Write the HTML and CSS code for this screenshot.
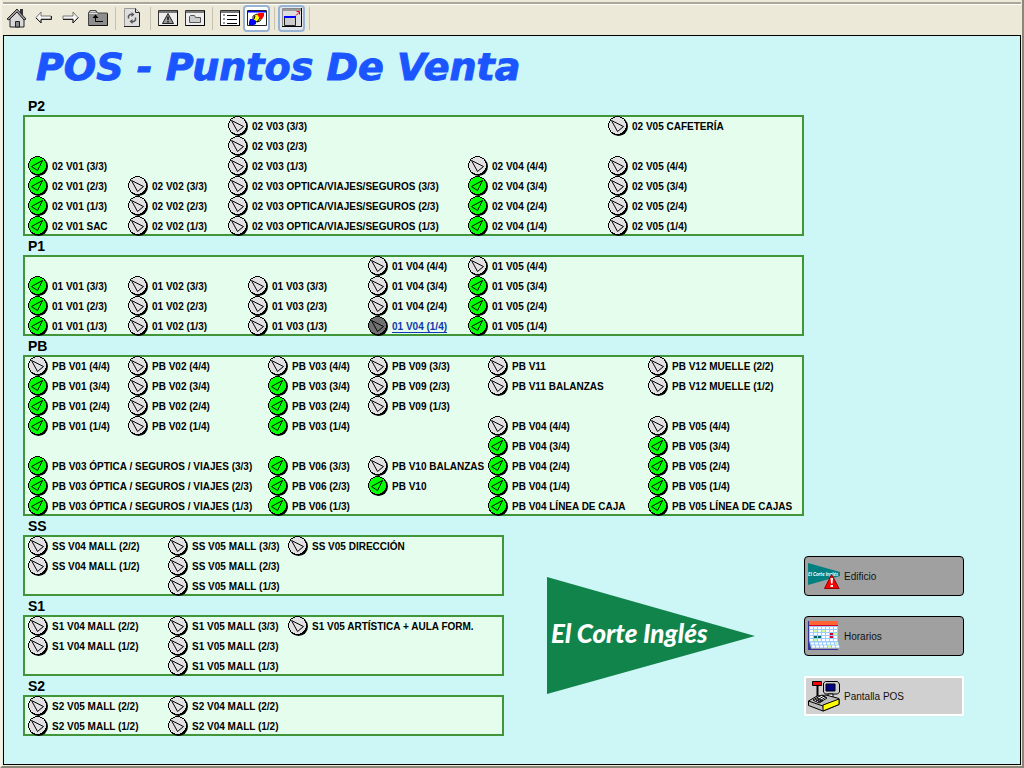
FILE: index.html
```
<!DOCTYPE html>
<html lang="es">
<head>
<meta charset="utf-8">
<title>POS - Puntos De Venta</title>
<link rel="stylesheet" href="styles.css">
</head>
<body>
<div class="window">
<nav class="toolbar" aria-label="Herramientas">
  <button class="tool" aria-label="Inicio"><svg width="20" height="20" viewBox="0 0 20 20"><path d="M13 1h3v6h-3z" fill="#333"/><path d="M3 10L10 4l7 6v9H3z" fill="#d8d8d8" stroke="#222"/><path d="M0 11L10 1l9 10-2 1-7-8-8 8z" fill="#999" stroke="#222"/><path d="M8.500 13.500h4V19h-4z" fill="#888" stroke="#222"/></svg></button>
  <button class="tool" aria-label="Atrás"><svg width="20" height="20" viewBox="0 0 20 20"><path d="M2 9.500L7 4v4h10v3H7v4z" fill="#f4f4f4" stroke="#777"/><path d="M7 11.500h10.500V8M2 10l5 5v-3" fill="none" stroke="#222"/></svg></button>
  <button class="tool" aria-label="Adelante"><svg width="20" height="20" viewBox="0 0 20 20"><path d="M17 9.500L12 4v4H2v3h10v4z" fill="#f4f4f4" stroke="#777"/><path d="M2 11.500h10V15l5.500-5.500" fill="none" stroke="#222"/></svg></button>
  <button class="tool" aria-label="Subir"><svg width="20" height="20" viewBox="0 0 20 20"><path d="M.5 17.500V5L2 2.500h6L9.500 5h10v12.500z" fill="#8d8d8d" stroke="#444"/><path d="M1 5.500h8.500M2.500 3.500h5" stroke="#ddd"/><path d="M1 17.500h18.500V6" fill="none" stroke="#111"/><path d="M7.500 8v5.500H15" fill="none" stroke="#000"/><path d="M4.500 10l3-3.500 3 3.500z"/></svg></button>
  <span class="sep"></span>
  <button class="tool" aria-label="Actualizar"><svg width="20" height="20" viewBox="0 0 20 20"><path d="M1.500.5h11l4 4v14h-15z" fill="#dedede" stroke="#999"/><path d="M1 18.500h15.500V4.500h-4V.5" fill="none" stroke="#222"/><path d="M5.500 10.500V8l1.500-1.500h2M12.500 9.500V12L11 13.500H9" fill="none" stroke="#555" stroke-width="1.500"/><path d="M8.500 4l3 2.500-3 2.500zM9.500 11l-3 2.500 3 2.500z" fill="#555"/></svg></button>
  <span class="sep"></span>
  <button class="tool" aria-label="Alarmas"><svg width="20" height="20" viewBox="0 0 20 20"><path d="M.5 2.500h19v15H.5z" fill="#eee" stroke="#333"/><path d="M1 3h18v2H1z" fill="#777"/><path d="M.5 17.500h19v-15" fill="none" stroke="#000"/><path d="M10 5.500L15.500 15.500h-11z" fill="#999" stroke="#222"/><path d="M10 8.500v3.500M10 13v1.500" stroke="#111" stroke-width="1.500"/></svg></button>
  <button class="tool" aria-label="Carpetas"><svg width="20" height="20" viewBox="0 0 20 20"><path d="M.5 2.500h19v15H.5z" fill="#eee" stroke="#333"/><path d="M1 3h18v2H1z" fill="#777"/><path d="M.5 17.500h19v-15" fill="none" stroke="#000"/><path d="M4.500 14.500v-6l1-1h4l1 2h5v5z" fill="#ccc" stroke="#555"/></svg></button>
  <span class="sep"></span>
  <button class="tool" aria-label="Lista"><svg width="20" height="20" viewBox="0 0 20 20"><path d="M.5 2.500h19v15H.5z" fill="#fff" stroke="#333"/><path d="M1 3h18v2H1z" fill="#777"/><path d="M.5 17.500h19v-15" fill="none" stroke="#000"/><path d="M7 7.500h10M7 11.500h10M7 15.500h10" stroke="#000"/><path d="M3.500 6.500h1v1h-1zM3.500 10.500h1v1h-1zM3.500 14.500h1v1h-1z" fill="none" stroke="#777"/></svg></button>
  <button class="tool active" aria-label="Gráfico"><svg width="20" height="20" viewBox="0 0 20 20"><path d="M.5 2.500h19v15H.5z" fill="#fff" stroke="#222"/><path d="M1 3h18v1.500H1z" fill="#00f"/><path d="M6 8l4-2 5 4-2 3-3 1-4-2z" fill="#ff0" stroke="#222"/><path d="M10 6l2-1h5v3l-2 3h-2z" fill="#f00"/><path d="M3 11h3l3 2v3l-2 1H2v-3z" fill="#00f"/><path d="M8 8l-1 3M13 10l-3 4" stroke="#000"/></svg></button>
  <span class="sep"></span>
  <button class="tool active pressed" aria-label="Ventana"><svg width="20" height="20" viewBox="0 0 20 20"><path d="M.5.5h19v18H.5z" fill="#ddd" stroke="#888"/><path d="M1 1h18v2H1z" fill="#999"/><path d="M19.500 0v18.500H0" fill="none" stroke="#000"/><path d="M2.500 8.500h11v9h-11z" fill="#ccc" stroke="#222"/><path d="M2 8h12v2H2z" fill="#00f"/><path d="M14 7.500l3.500-3.500M14.500 3.500h3v3" fill="none" stroke="#d02"/></svg></button>
  <span class="sep"></span>
</nav>
<main class="board">
  <h1>POS - Puntos De Venta</h1>
  <h2>P2</h2>
  <section class="panel p2 bottom">
    <ul><li><a class="on" href="#">02 V01 (3/3)</a></li><li><a class="on" href="#">02 V01 (2/3)</a></li><li><a class="on" href="#">02 V01 (1/3)</a></li><li><a class="on" href="#">02 V01 SAC</a></li></ul>
    <ul><li><a href="#">02 V02 (3/3)</a></li><li><a href="#">02 V02 (2/3)</a></li><li><a href="#">02 V02 (1/3)</a></li></ul>
    <ul><li><a href="#">02 V03 (3/3)</a></li><li><a href="#">02 V03 (2/3)</a></li><li><a href="#">02 V03 (1/3)</a></li><li><a href="#">02 V03 OPTICA/VIAJES/SEGUROS (3/3)</a></li><li><a href="#">02 V03 OPTICA/VIAJES/SEGUROS (2/3)</a></li><li><a href="#">02 V03 OPTICA/VIAJES/SEGUROS (1/3)</a></li></ul>
    <ul><li><a href="#">02 V04 (4/4)</a></li><li><a class="on" href="#">02 V04 (3/4)</a></li><li><a class="on" href="#">02 V04 (2/4)</a></li><li><a class="on" href="#">02 V04 (1/4)</a></li></ul>
    <ul><li><a href="#">02 V05 CAFETERÍA</a></li><li class="skip"><a href="#">02 V05 (4/4)</a></li><li><a href="#">02 V05 (3/4)</a></li><li><a href="#">02 V05 (2/4)</a></li><li><a href="#">02 V05 (1/4)</a></li></ul>
  </section>
  <h2>P1</h2>
  <section class="panel p1 bottom">
    <ul><li><a class="on" href="#">01 V01 (3/3)</a></li><li><a class="on" href="#">01 V01 (2/3)</a></li><li><a class="on" href="#">01 V01 (1/3)</a></li></ul>
    <ul><li><a href="#">01 V02 (3/3)</a></li><li><a href="#">01 V02 (2/3)</a></li><li><a href="#">01 V02 (1/3)</a></li></ul>
    <ul><li><a href="#">01 V03 (3/3)</a></li><li><a href="#">01 V03 (2/3)</a></li><li><a href="#">01 V03 (1/3)</a></li></ul>
    <ul><li><a href="#">01 V04 (4/4)</a></li><li><a href="#">01 V04 (3/4)</a></li><li><a href="#">01 V04 (2/4)</a></li><li><a class="selected" href="#">01 V04 (1/4)</a></li></ul>
    <ul><li><a href="#">01 V05 (4/4)</a></li><li><a class="on" href="#">01 V05 (3/4)</a></li><li><a class="on" href="#">01 V05 (2/4)</a></li><li><a class="on" href="#">01 V05 (1/4)</a></li></ul>
  </section>
  <h2>PB</h2>
  <section class="panel pb">
    <ul><li><a href="#">PB V01 (4/4)</a></li><li><a class="on" href="#">PB V01 (3/4)</a></li><li><a class="on" href="#">PB V01 (2/4)</a></li><li><a class="on" href="#">PB V01 (1/4)</a></li><li class="skip"><a class="on" href="#">PB V03 ÓPTICA / SEGUROS / VIAJES (3/3)</a></li><li><a class="on" href="#">PB V03 ÓPTICA / SEGUROS / VIAJES (2/3)</a></li><li><a class="on" href="#">PB V03 ÓPTICA / SEGUROS / VIAJES (1/3)</a></li></ul>
    <ul><li><a href="#">PB V02 (4/4)</a></li><li><a href="#">PB V02 (3/4)</a></li><li><a href="#">PB V02 (2/4)</a></li><li><a href="#">PB V02 (1/4)</a></li></ul>
    <ul><li><a href="#">PB V03 (4/4)</a></li><li><a class="on" href="#">PB V03 (3/4)</a></li><li><a class="on" href="#">PB V03 (2/4)</a></li><li><a class="on" href="#">PB V03 (1/4)</a></li><li class="skip"><a class="on" href="#">PB V06 (3/3)</a></li><li><a class="on" href="#">PB V06 (2/3)</a></li><li><a class="on" href="#">PB V06 (1/3)</a></li></ul>
    <ul><li><a href="#">PB V09 (3/3)</a></li><li><a href="#">PB V09 (2/3)</a></li><li><a href="#">PB V09 (1/3)</a></li><li class="skip-two"><a href="#">PB V10 BALANZAS</a></li><li><a class="on" href="#">PB V10</a></li></ul>
    <ul><li><a href="#">PB V11</a></li><li><a href="#">PB V11 BALANZAS</a></li><li class="skip"><a href="#">PB V04 (4/4)</a></li><li><a class="on" href="#">PB V04 (3/4)</a></li><li><a class="on" href="#">PB V04 (2/4)</a></li><li><a class="on" href="#">PB V04 (1/4)</a></li><li><a class="on" href="#">PB V04 LÍNEA DE CAJA</a></li></ul>
    <ul><li><a href="#">PB V12 MUELLE (2/2)</a></li><li><a href="#">PB V12 MUELLE (1/2)</a></li><li class="skip"><a href="#">PB V05 (4/4)</a></li><li><a class="on" href="#">PB V05 (3/4)</a></li><li><a class="on" href="#">PB V05 (2/4)</a></li><li><a class="on" href="#">PB V05 (1/4)</a></li><li><a class="on" href="#">PB V05 LÍNEA DE CAJAS</a></li></ul>
  </section>
  <div class="lower">
    <div class="basement">
      <h2>SS</h2>
      <section class="panel mall">
        <ul><li><a href="#">SS V04 MALL (2/2)</a></li><li><a href="#">SS V04 MALL (1/2)</a></li></ul>
        <ul><li><a href="#">SS V05 MALL (3/3)</a></li><li><a href="#">SS V05 MALL (2/3)</a></li><li><a href="#">SS V05 MALL (1/3)</a></li></ul>
        <ul><li><a href="#">SS V05 DIRECCIÓN</a></li></ul>
      </section>
      <h2>S1</h2>
      <section class="panel mall">
        <ul><li><a href="#">S1 V04 MALL (2/2)</a></li><li><a href="#">S1 V04 MALL (1/2)</a></li></ul>
        <ul><li><a href="#">S1 V05 MALL (3/3)</a></li><li><a href="#">S1 V05 MALL (2/3)</a></li><li><a href="#">S1 V05 MALL (1/3)</a></li></ul>
        <ul><li><a href="#">S1 V05 ARTÍSTICA + AULA FORM.</a></li></ul>
      </section>
      <h2>S2</h2>
      <section class="panel mall">
        <ul><li><a href="#">S2 V05 MALL (2/2)</a></li><li><a href="#">S2 V05 MALL (1/2)</a></li></ul>
        <ul><li><a href="#">S2 V04 MALL (2/2)</a></li><li><a href="#">S2 V04 MALL (1/2)</a></li></ul>
      </section>
    </div>
    <svg class="logo" width="208" height="118" viewBox="0 0 208 118" role="img" aria-label="El Corte Inglés">
      <path d="M0 0L208 59 0 117z" fill="#11844b"/>
      <text class="logo-text" x="4" y="66">El Corte Inglés</text>
    </svg>
    <div class="actions">
      <button class="action">
        <svg width="32" height="32" viewBox="0 0 32 32"><path d="M0 3L32 12v4L0 25z" fill="#008080"/><text class="logo-mini" x="0" y="16">El Corte Inglés</text><path d="M25 16l7 13H18z" fill="#777"/><path d="M23.500 14.500L31 28.500H16.500z" fill="#f00" stroke="#900"/><path d="M22.500 18h2.500l-.5 5.500H23zM22.500 25H25v2h-2.500z" fill="#fff"/></svg>
        Edificio</button>
      <button class="action">
        <svg width="32" height="32" viewBox="0 0 32 32"><path d="M0 1h1l2 28h27v1H0z" fill="#339"/><path d="M1 1h29v4H1z" fill="#f63"/><path d="M1 5h29v1H1z" fill="#c03"/><path d="M1 6h29v15l2 7H3L1 21z" fill="#9cf"/><path d="M2 8h27M2 11h27M2 14h27M2 17h27M2 20h27M3 23.500h27M4 26.500h27" stroke="#fff" stroke-width="2" stroke-dasharray="3 1"/><path d="M6 11h3M14 11h3M26 14h3M6 20h3M27 23.500h3M20 26.500h3" stroke="#cf9" stroke-width="2"/><path d="M6 17h3M10 17h3" stroke="#066" stroke-width="2"/><path d="M22 14h3M22 17h3" stroke="#c03" stroke-width="2"/></svg>
        Horarios</button>
      <button class="action current">
        <svg width="32" height="32" viewBox="0 0 32 32"><path d="M9.500 5v13" stroke="#000" stroke-width="2"/><path d="M4.500 1.500h9v4h-9z" fill="#f00" stroke="#000"/><path d="M15.500 3l2-1.500h12L31.500 4v8l-2 2h-12l-2-2z" fill="#ccc" stroke="#000"/><path d="M18 4h9v7h-9z" fill="#008" stroke="#000"/><path d="M20 14h5v5h-5z" fill="#fff" stroke="#000"/><path d="M.5 21L9 16l9-1 13 3.500v6L15 31 .5 25.500z" fill="#bbb" stroke="#000"/><path d="M15 25l16-6v5.500L15 31z" fill="#ff0" stroke="#000"/><path d="M.5 21L15 26" stroke="#000"/><path d="M5 20l9-5 5 3-8 5z" fill="#fff" stroke="#000"/><path d="M7 19l6 3M9 18l6 3M8 21l8-5M10 22l8-5" stroke="#000"/></svg>
        Pantalla POS</button>
    </div>
  </div>
</main>
</div>
</body>
</html>
```
FILE: styles.css
```
* { box-sizing: border-box; }

body {
  margin: 0;
  font-family: "Liberation Sans", Arial, sans-serif;
  color: #000;
}

.window {
  min-height: 100vh;
  display: flex;
  flex-direction: column;
  padding: 2px 1px 1px 1px;
  background: #ece9d8;
  border: solid;
  border-width: 0 2px 2px 2px;
  border-color: #ece9d8 #8a8778 #8a8778 #f4f2e8;
}

.toolbar {
  display: flex;
  align-items: center;
  height: 33px;
  padding-bottom: 3px;
  border-top: 2px solid #aca899;
  box-shadow: inset 0 1px #fff;
}

.tool {
  display: flex;
  align-items: center;
  justify-content: center;
  width: 27px;
  height: 27px;
  padding: 0;
  border: 2px solid transparent;
  border-radius: 4px;
  background: none;
}

.tool svg { flex: none; }

.tool.active {
  background: #fff;
  border-color: #98b4d4;
}

.tool.pressed { background: #e4e8ee; }

.sep {
  width: 8px;
  height: 23px;
  background: linear-gradient(#c5c2b2, #c5c2b2) center / 1px 100% no-repeat;
}

.board {
  flex: 1;
  padding: 0 19px 28px;
  border: 1px solid #000;
  background: #cdf6f6;
}

h1 {
  margin: 0;
  padding: 2px 0 0 13px;
  font: italic 900 38px/58px "Arial Black", "DejaVu Sans", sans-serif;
  color: #1b55ff;
  -webkit-text-stroke: 1px #1b55ff;
  white-space: nowrap;
}

h2 {
  margin: 0;
  padding: 1px 0 0 5px;
  font: bold 14px/18px "Liberation Sans", Arial, sans-serif;
}

.panel {
  display: grid;
  max-width: 781px;
  padding: 1px 0 0 5px;
  background: #e5fdec;
  box-shadow: inset 0 0 0 2px #42963a;
}

.panel.bottom { align-items: end; }
.p2 { grid-template-columns: 100px 100px 240px 140px 1fr; }
.p1 { grid-template-columns: 100px 120px 120px 100px 1fr; }
.pb { grid-template-columns: 100px 140px 100px 120px 160px 1fr; }
.mall { grid-template-columns: 140px 120px 1fr; }

ul {
  min-width: 0;
  margin: 0;
  padding: 0;
  list-style: none;
}

li { height: 20px; }
.skip { margin-top: 20px; }
.skip-two { margin-top: 40px; }

.panel a {
  display: flex;
  gap: 4px;
  height: 20px;
  font-size: 10px;
  font-weight: bold;
  line-height: 22px;
  color: #000;
  text-decoration: none;
  white-space: nowrap;
}

.panel a::before {
  content: "";
  flex: none;
  width: 20px;
  height: 20px;
  background: url("data:image/svg+xml,%3Csvg xmlns='http://www.w3.org/2000/svg' viewBox='0 0 20 20'%3E%3Ccircle cx='10.500' cy='10.500' r='9.500'/%3E%3Ccircle cx='9.500' cy='9.500' r='9' fill='%23e2e0e2' stroke='%23000' shape-rendering='crispEdges'/%3E%3Cpath d='M3.500 4.500L15.500 10.500 9.500 15.500z' fill='none' stroke='%23000'/%3E%3C/svg%3E");
}

.panel a.on::before {
  background-image: url("data:image/svg+xml,%3Csvg xmlns='http://www.w3.org/2000/svg' viewBox='0 0 20 20'%3E%3Ccircle cx='10.500' cy='10.500' r='9.500'/%3E%3Ccircle cx='9.500' cy='9.500' r='9' fill='%2300ff00' stroke='%23000' shape-rendering='crispEdges'/%3E%3Cpath d='M14.500 4.500L3.500 10.500 9.500 14.500z' fill='none' stroke='%23000'/%3E%3C/svg%3E");
}

.panel a.selected {
  color: #1038b0;
  text-decoration: underline;
  text-underline-offset: 2px;
}

.panel a.selected::before {
  background-image: url("data:image/svg+xml,%3Csvg xmlns='http://www.w3.org/2000/svg' viewBox='0 0 20 20'%3E%3Ccircle cx='10.500' cy='10.500' r='9.500'/%3E%3Ccircle cx='9.500' cy='9.500' r='9' fill='%23707070' stroke='%23000' shape-rendering='crispEdges'/%3E%3Cpath d='M3.500 4.500L15.500 10.500 9.500 15.500z' fill='none' stroke='%23000'/%3E%3C/svg%3E");
}

.lower {
  display: grid;
  grid-template-columns: 481px 1fr 160px;
  max-width: 941px;
}

.logo { margin: 61px 0 0 43px; }

.logo-text {
  font: italic 900 26px Lato, sans-serif;
  fill: #fff;
}

.logo-mini {
  font: italic bold 5px Lato, sans-serif;
  fill: #fff;
}

.actions {
  display: flex;
  flex-direction: column;
  gap: 20px;
  padding-top: 40px;
}

.action {
  display: flex;
  align-items: center;
  gap: 4px;
  height: 40px;
  padding: 0 3px;
  border: 1px solid #000;
  border-radius: 4px;
  background: #a0a0a0;
  font: 10px "Liberation Sans", Arial, sans-serif;
  color: #111;
  text-align: left;
}

.action.current {
  padding: 0 2px;
  border: 2px solid #fff;
  border-radius: 2px;
  background: #d0d0d0;
}
```
